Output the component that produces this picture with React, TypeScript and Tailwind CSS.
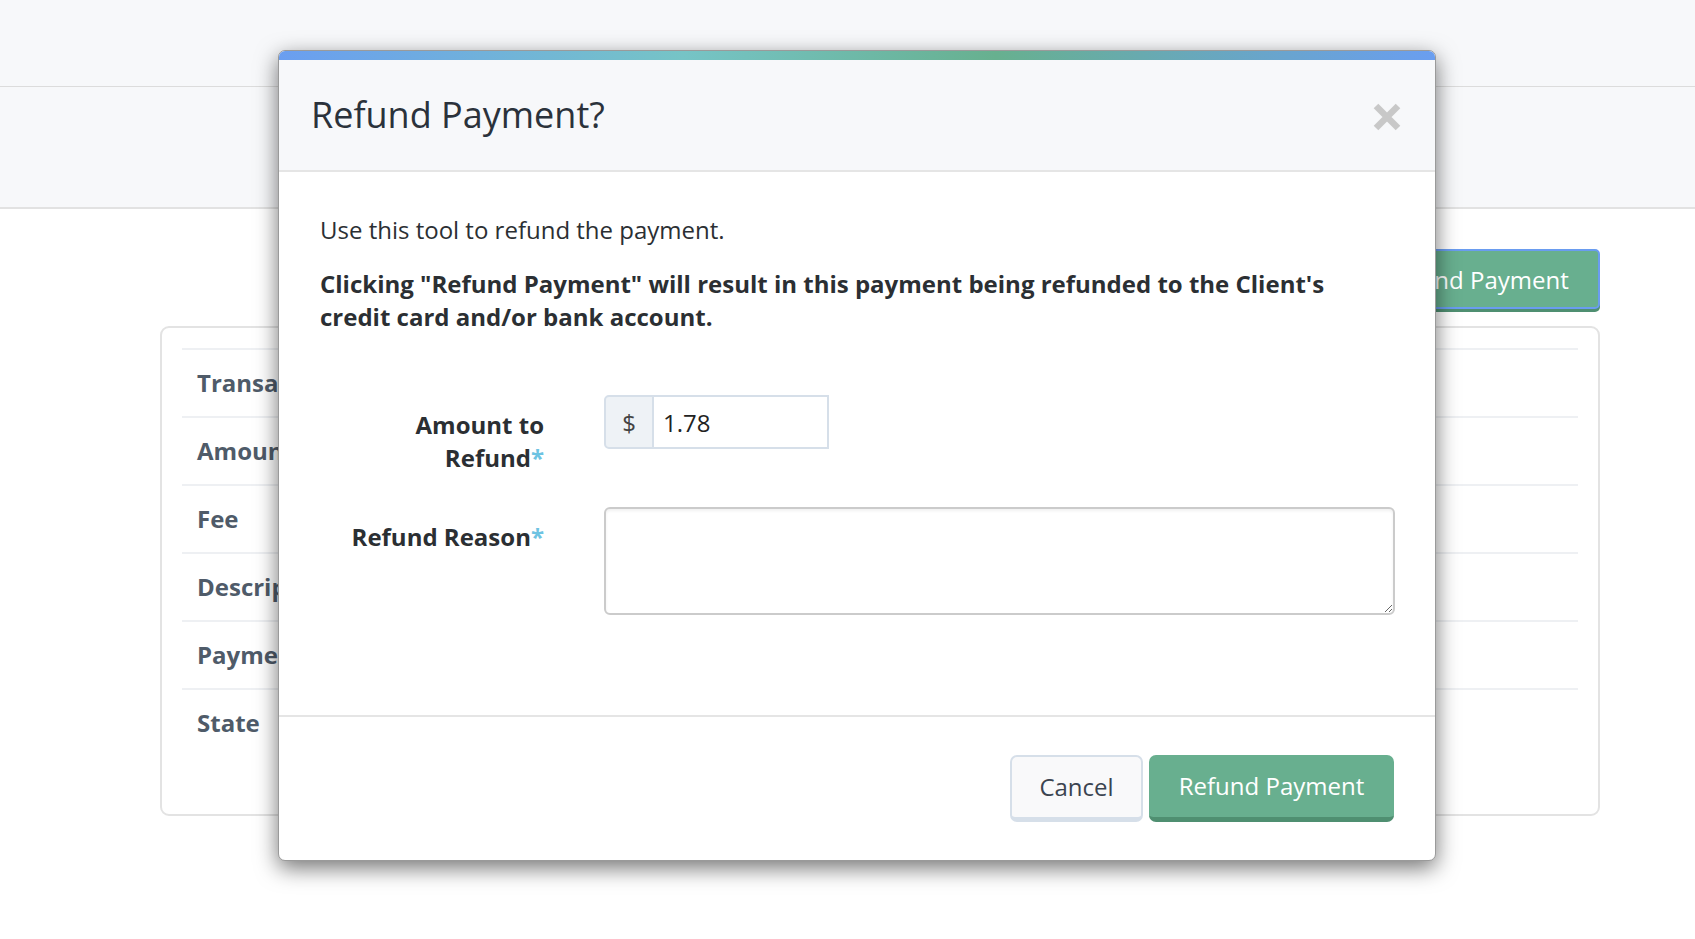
const rows = ["Transaction ID", "Amount", "Fee", "Description", "Payment Method", "State"];

function RefundModal() {
  return (
    <div className="absolute left-[278px] top-[50px] w-[1158px] overflow-hidden rounded-[7px] border border-[#9a9a9a] bg-white shadow-[0_7px_22px_rgba(0,0,0,0.55)]">
      <div className="h-[9px] bg-[linear-gradient(to_right,#6a9ef0_0%,#76c4c6_35%,#67b08f_62%,#6a9ef0_100%)]" />
      <div className="flex h-[112px] items-center justify-between border-b-2 border-[#e5e5e5] bg-[#f7f8fa] pl-8 pr-[34px]">
        <h2 className="text-[36px] leading-[40px] text-[#2b323b]">Refund Payment?</h2>
        <button type="button" className="mt-1 text-[#c8c8c8]" aria-label="Close">
          <svg width="28" height="28" viewBox="0 0 28 28" fill="none">
            <path d="M3 3L25 25M25 3L3 25" stroke="currentColor" strokeWidth="6.5" />
          </svg>
        </button>
      </div>

      <div className="px-[41px] pb-[100px] pt-[41px] text-[24px] leading-[33px] text-[#2b2f33]">
        <p className="mb-[21px]">Use this tool to refund the payment.</p>
        <p className="font-bold">
          Clicking "Refund Payment" will result in this payment being refunded to the Client's credit card and/or bank
          account.
        </p>

        <div className="mt-[62px] grid grid-cols-[224px_791px] gap-x-[60px] gap-y-[33px]">
          <label className="pt-[13px] text-right font-bold">
            Amount to Refund<span className="text-[#6ec3e2]">*</span>
          </label>
          <div className="flex h-[54px] w-[225px] self-start">
            <span className="flex w-[50px] items-center justify-center rounded-l-[5px] border-2 border-[#d6dfe9] bg-[#eef2f6] text-[#444]">
              $
            </span>
            <input
              defaultValue="1.78"
              className="w-[175px] border-2 border-l-0 border-[#d6dfe9] pl-[9px] text-[24px] text-[#222] outline-none"
            />
          </div>

          <label className="pt-[13px] text-right font-bold">
            Refund Reason<span className="text-[#6ec3e2]">*</span>
          </label>
          <textarea className="h-[108px] w-full rounded-[6px] border-2 border-[#cbcbcb] shadow-[inset_0_2px_3px_rgba(0,0,0,0.06)] outline-none" />
        </div>
      </div>

      <div className="flex justify-end gap-[6px] border-t-2 border-[#e5e5e5] px-[41px] pb-[38px] pt-[38px]">
        <button
          type="button"
          className="h-[67px] w-[133px] rounded-[7px] border-2 border-b-[5px] border-[#d6dfe9] bg-[#f9f9fa] text-[24px] text-[#3b4450]"
        >
          Cancel
        </button>
        <button
          type="button"
          className="h-[67px] w-[245px] rounded-[7px] border-b-[5px] border-[#4f8f71] bg-[#68af8f] text-[24px] text-white"
        >
          Refund Payment
        </button>
      </div>
    </div>
  );
}

export default function App() {
  return (
    <div className="relative h-[939px] w-full overflow-hidden bg-white font-['Open_Sans',sans-serif]">
      <div className="h-[87px] border-b border-[#dcdcdc] bg-[#f7f8fa]" />
      <div className="h-[122px] border-b-2 border-[#e2e2e2] bg-[#f7f8fa]" />

      <div className="pl-[160px] pr-[95px] pt-[40px]">
        <div className="flex justify-end">
          <button
            type="button"
            className="h-[60px] w-[248px] rounded-[5px] border-2 border-[#6a9cf0] bg-[#68af8f] pt-[2px] text-[24px] text-white shadow-[0_3px_0_#4f8f71]"
          >
            Refund Payment
          </button>
        </div>

        <div className="mt-[17px] h-[490px] rounded-[9px] border-2 border-[#e3e3e3] px-[20px] pt-[20px]">
          {rows.map((r) => (
            <div
              key={r}
              className="flex h-[68px] items-center border-t-2 border-[#eef0f3] pl-[15px] text-[24px] font-bold text-[#4f5b69]"
            >
              {r}
            </div>
          ))}
        </div>
      </div>

      <RefundModal />
    </div>
  );
}
